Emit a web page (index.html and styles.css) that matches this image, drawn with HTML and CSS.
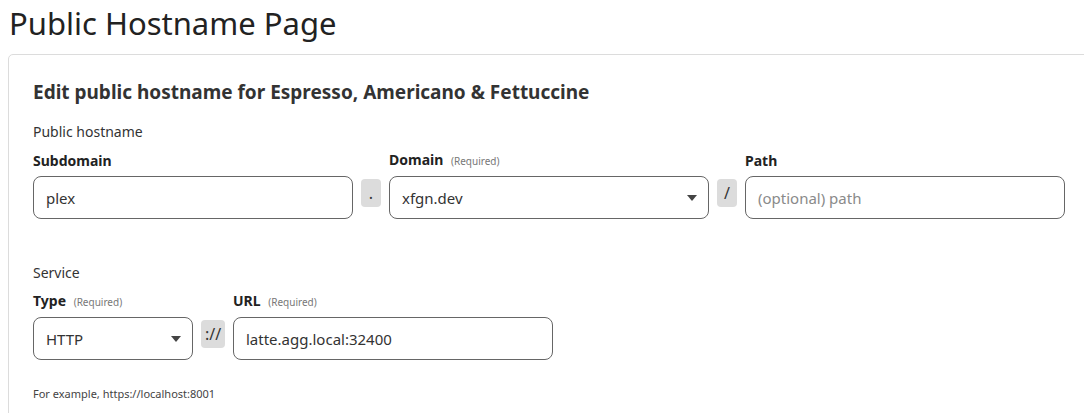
FILE: index.html
```html
<!DOCTYPE html>
<html lang="en">
<head>
<meta charset="utf-8">
<title>Public Hostname Page</title>
<link rel="stylesheet" href="styles.css">
</head>
<body>
<h1 class="page-title">Public Hostname Page</h1>
<section class="card">
  <h2 class="card-title">Edit public hostname for Espresso, Americano &amp; Fettuccine</h2>

  <div class="group">
    <div class="group-label">Public hostname</div>
    <div class="grid grid-host">
      <label class="field-label" for="sub">Subdomain</label>
      <span></span>
      <label class="field-label" for="dom">Domain <span class="req">(Required)</span></label>
      <span></span>
      <label class="field-label" for="path">Path</label>

      <input class="control" id="sub" type="text" value="plex">
      <span class="sep">.</span>
      <div class="select-wrap">
        <select class="control select" id="dom"><option>xfgn.dev</option></select>
        <svg class="caret" width="10" height="6" viewBox="0 0 10 6"><path d="M0 0h10L5 6z" fill="#444"/></svg>
      </div>
      <span class="sep">/</span>
      <input class="control" id="path" type="text" placeholder="(optional) path">
    </div>
  </div>

  <div class="group group-service">
    <div class="group-label">Service</div>
    <div class="grid grid-svc">
      <label class="field-label" for="type">Type <span class="req">(Required)</span></label>
      <span></span>
      <label class="field-label" for="url">URL <span class="req">(Required)</span></label>

      <div class="select-wrap">
        <select class="control select" id="type"><option>HTTP</option></select>
        <svg class="caret" width="10" height="6" viewBox="0 0 10 6"><path d="M0 0h10L5 6z" fill="#444"/></svg>
      </div>
      <span class="sep sep-wide">://</span>
      <input class="control" id="url" type="text" value="latte.agg.local:32400">
    </div>
    <p class="hint">For example, https://localhost:8001</p>
  </div>
</section>
</body>
</html>
```

FILE: styles.css
```css
* { box-sizing: border-box; }

html, body {
  margin: 0;
  padding: 0;
  background: #fff;
  overflow: hidden;
}

body {
  font-family: "Noto Sans", "Open Sans", sans-serif;
  color: #333;
  padding-left: 8px;
}

.page-title {
  margin: 0;
  padding-left: 1px;
  font-size: 31px;
  font-weight: 400;
  line-height: 46px;
  color: #222;
}

.card {
  margin-top: 8px;
  margin-right: -30px;
  border: 1px solid #dcdcdc;
  border-radius: 5px;
  padding: 24px 24px 20px 24px;
}

.card-title {
  margin: 0;
  font-size: 19px;
  line-height: 26px;
  font-weight: 700;
  color: #333;
}

.group { margin-top: 17px; }
.group-service { margin-top: 44px; }

.group-label {
  font-size: 14px;
  line-height: 20px;
  color: #333;
  margin-bottom: 8px;
}

.grid {
  display: grid;
  column-gap: 8px;
  row-gap: 5px;
  align-items: end;
}
.grid-host { grid-template-columns: 320px 20px 320px 20px 320px; }
.grid-svc  { grid-template-columns: 160px 24px 320px; }

.field-label {
  font-size: 14px;
  line-height: 20px;
  font-weight: 700;
  color: #222;
}

.req {
  font-size: 10px;
  font-weight: 400;
  color: #777;
  margin-left: 4px;
}

.control {
  display: block;
  width: 100%;
  height: 43px;
  border: 1px solid #666;
  border-radius: 8px;
  padding: 0 12px;
  font-family: inherit;
  font-size: 15px;
  color: #333;
  background: #fff;
  outline: none;
}
.control::placeholder { color: #8a8a8a; }

.select {
  appearance: none;
  -webkit-appearance: none;
  padding-right: 30px;
}

.select-wrap { position: relative; }

.caret {
  position: absolute;
  right: 12px;
  top: 19px;
  pointer-events: none;
}

.sep {
  align-self: start;
  margin-top: 3px;
  height: 28px;
  background: #dcdcdc;
  border-radius: 4px;
  font-size: 16px;
  line-height: 28px;
  text-align: center;
  color: #333;
}
.grid > span:empty { height: 0; }

.hint {
  margin: 26px 0 0 0;
  font-size: 11px;
  line-height: 16px;
  color: #444;
}
```
